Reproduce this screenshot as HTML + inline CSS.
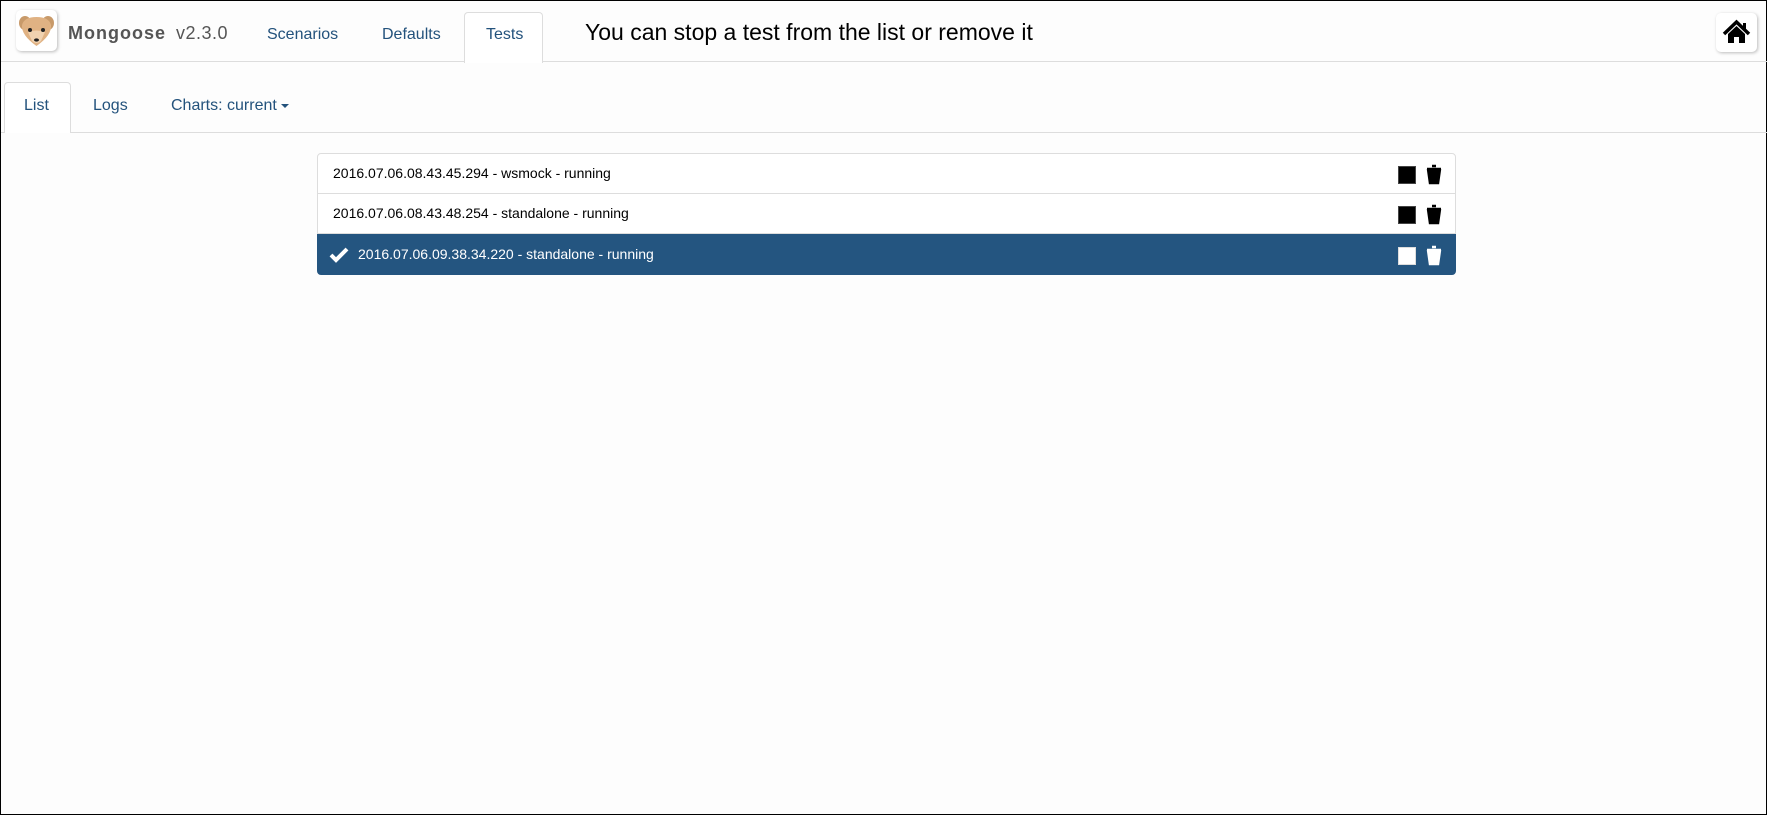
<!DOCTYPE html>
<html><head><meta charset="utf-8"><style>
*{box-sizing:border-box}
body{margin:0;width:1767px;height:815px;background:#fdfdfd;font-family:"Liberation Sans",sans-serif;position:relative;overflow:hidden;border:1px solid #000}
.a{position:absolute}
.hdr{left:0;top:0;width:1767px;height:61px;border-bottom:1px solid #ddd}
.logo{left:15px;top:9px;width:41px;height:41px;border-radius:5px;background:#fff;box-shadow:1px 1px 3px #bbb}
.nav{color:#23527c;font-size:16px}
.tab{border:1px solid #ddd;border-bottom:none;background:#fff;border-radius:4px 4px 0 0}
.row{left:316px;width:1139px;height:41px;border:1px solid #ddd;background:#fff;font-size:14px;color:#000;padding-left:15px;line-height:39px}
.sq{position:absolute;right:39px;top:12px;width:18px;height:18px;background:#000;border:1px solid #444}
.tr{position:absolute;right:13px;top:9px}
</style></head><body>
<div class="a hdr"></div>
<div class="a logo"><svg width="41" height="41" viewBox="0 0 41 41"><ellipse cx="9" cy="13" rx="6" ry="7" fill="#c89a6a"/><ellipse cx="32" cy="13" rx="6" ry="7" fill="#c89a6a"/><path d="M6 15 Q8 7 20.5 7 Q33 7 35 15 Q36 25 20.5 36 Q5 25 6 15Z" fill="#e0b283"/><path d="M12 22 Q20 19 29 22 L25 31 Q20.5 35 16 31Z" fill="#f0d2b0"/><circle cx="14" cy="20" r="2" fill="#222"/><circle cx="27" cy="20" r="2" fill="#222"/><ellipse cx="20.5" cy="30" rx="2.5" ry="1.6" fill="#222"/></svg></div>
<div class="a" style="left:67px;top:22px;font-size:18px;font-weight:bold;color:#555;letter-spacing:1px">Mongoose</div>
<div class="a" style="left:175px;top:22px;font-size:18px;color:#555;letter-spacing:0.5px">v2.3.0</div>
<div class="a nav" style="left:266px;top:25px">Scenarios</div>
<div class="a nav" style="left:381px;top:25px">Defaults</div>
<div class="a tab" style="left:463px;top:11px;width:79px;height:51px"></div>
<div class="a nav" style="left:485px;top:25px">Tests</div>
<div class="a" style="left:584px;top:18px;font-size:23px;color:#000">You can stop a test from the list or remove it</div>
<div class="a" style="left:1715px;top:12px;width:41px;height:39px;border-radius:5px;background:#fff;box-shadow:1px 1px 3px #bbb"><svg width="41" height="39" viewBox="0 0 41 39"><path d="M8 21 L20.5 9 L33 21" stroke="#000" stroke-width="3.5" fill="none"/><rect x="27" y="10" width="3" height="7" fill="#000"/><path d="M12 21 L20.5 13 L29 21 V30 H23 V24 H18 V30 H12Z" fill="#000"/></svg></div>
<div class="a" style="left:0;top:131px;width:1767px;border-top:1px solid #ddd"></div>
<div class="a tab" style="left:3px;top:81px;width:67px;height:51px"></div>
<div class="a nav" style="left:23px;top:96px">List</div>
<div class="a nav" style="left:92px;top:96px">Logs</div>
<div class="a nav" style="left:170px;top:96px">Charts: current <span style="display:inline-block;border-top:4px solid #23527c;border-left:4px solid transparent;border-right:4px solid transparent;vertical-align:middle"></span></div>
<div class="a row" style="top:152px;border-radius:4px 4px 0 0">2016.07.06.08.43.45.294 - wsmock - running<div class="sq"></div><svg class="tr" width="16" height="22" viewBox="0 0 16 22"><path d="M6 3 H10 M1 6 H15 M2 6 L4 20 H12 L14 6" stroke="#000" stroke-width="2.5" fill="#000"/></svg></div>
<div class="a row" style="top:192px">2016.07.06.08.43.48.254 - standalone - running<div class="sq"></div><svg class="tr" width="16" height="22" viewBox="0 0 16 22"><path d="M6 3 H10 M1 6 H15 M2 6 L4 20 H12 L14 6" stroke="#000" stroke-width="2.5" fill="#000"/></svg></div>
<div class="a row" style="top:233px;background:#245580;border-color:#245580;color:#fff;border-radius:0 0 4px 4px;padding-left:40px"><svg style="position:absolute;left:11px;top:12px" width="20" height="16" viewBox="0 0 20 16"><path d="M2 8 L7 13 L18 2" stroke="#fff" stroke-width="4" fill="none"/></svg>2016.07.06.09.38.34.220 - standalone - running<div class="sq" style="background:#fff;border-color:#ddd"></div><svg class="tr" width="16" height="22" viewBox="0 0 16 22"><path d="M6 3 H10 M1 6 H15 M2 6 L4 20 H12 L14 6" stroke="#fff" stroke-width="2.5" fill="#fff"/></svg></div>
</body></html>
